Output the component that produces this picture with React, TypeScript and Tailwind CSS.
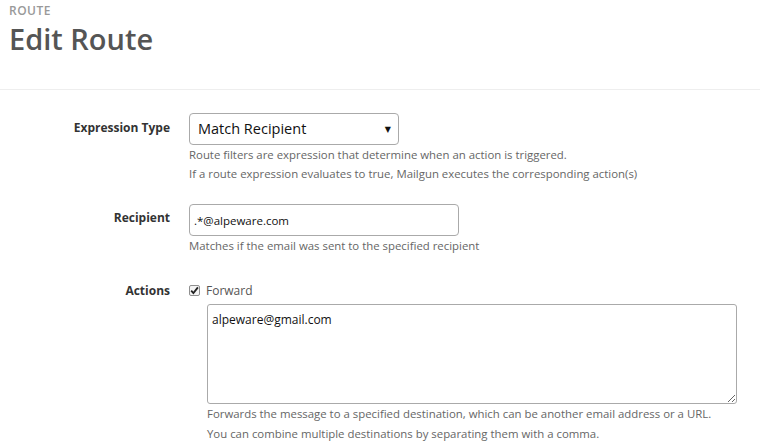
import React from "react";

const helpClass = "text-[11.4px] leading-[19px] text-[#666]";
const labelClass =
  "w-[170px] shrink-0 text-right text-[12px] font-bold text-[#333]";

function CheckMark() {
  return (
    <span className="flex h-[11px] w-[11px] items-center justify-center rounded-[2px] border border-[#8f8f8f] bg-[#f4f4f4]">
      <svg width="9" height="9" viewBox="0 0 9 9">
        <path
          d="M1.2 4.6 L3.4 7 L7.9 1.4"
          fill="none"
          stroke="#222"
          strokeWidth="1.8"
        />
      </svg>
    </span>
  );
}

export default function App() {
  return (
    <div
      className="h-[444px] w-[760px] overflow-hidden bg-white"
      style={{ fontFamily: '"Open Sans", "DejaVu Sans", sans-serif' }}
    >
      <div className="px-[9px] pt-[2px]">
        <p className="text-[12px] font-semibold uppercase leading-[18px] tracking-[0.04em] text-[#999]">
          Route
        </p>
        <h1 className="text-[29px] font-semibold leading-[38px] text-[#555]">
          Edit Route
        </h1>
      </div>
      <div className="mt-[31px] border-t border-[#eee]" />

      <form className="pt-[23px]">
        <div className="flex">
          <label className={`${labelClass} pt-[6px]`}>Expression Type</label>
          <div className="ml-[19px]">
            <div className="relative h-[32px] w-[210px] rounded-[4px] border border-[#aaa] bg-white">
              <select
                defaultValue="recipient"
                className="h-full w-full appearance-none bg-transparent pl-[8px] text-[14.5px] text-[#111] outline-none"
              >
                <option value="recipient">Match Recipient</option>
                <option value="header">Match Header</option>
                <option value="all">Catch All</option>
              </select>
              <span className="pointer-events-none absolute right-[7px] top-[9px] text-[8px] text-[#111]">
                ▼
              </span>
            </div>
            <p className={helpClass}>
              Route filters are expression that determine when an action is
              triggered.
            </p>
            <p className={helpClass}>
              If a route expression evaluates to true, Mailgun executes the
              corresponding action(s)
            </p>
          </div>
        </div>

        <div className="mt-[21px] flex">
          <label className={`${labelClass} pt-[5px]`}>Recipient</label>
          <div className="ml-[19px]">
            <input
              defaultValue=".*@alpeware.com"
              className="h-[32px] w-[270px] rounded-[4px] border border-[#aaa] bg-white px-[4px] text-[11.5px] text-[#111] outline-none"
            />
            <p className={helpClass}>
              Matches if the email was sent to the specified recipient
            </p>
          </div>
        </div>

        <div className="mt-[27px] flex">
          <label className={`${labelClass} pt-[0px]`}>Actions</label>
          <div className="ml-[19px]">
            <div className="flex items-center gap-[6px]">
              <span className="-mt-[2px]">
                <CheckMark />
              </span>
              <span className="text-[12px] leading-[18px] text-[#555]">
                Forward
              </span>
            </div>
            <div className="ml-[18px] mt-[4px]">
              <textarea
                defaultValue="alpeware@gmail.com"
                className="block h-[100px] w-[530px] rounded-[3px] border border-[#aaa] bg-white px-[4px] py-[6px] text-[12px] text-[#111] outline-none"
              />
              <p className="text-[11.4px] leading-[20px] text-[#666]">
                Forwards the message to a specified destination, which can be
                another email address or a URL.
              </p>
              <p className="text-[11.4px] leading-[20px] text-[#666]">
                You can combine multiple destinations by separating them with a
                comma.
              </p>
            </div>
          </div>
        </div>
      </form>
    </div>
  );
}
